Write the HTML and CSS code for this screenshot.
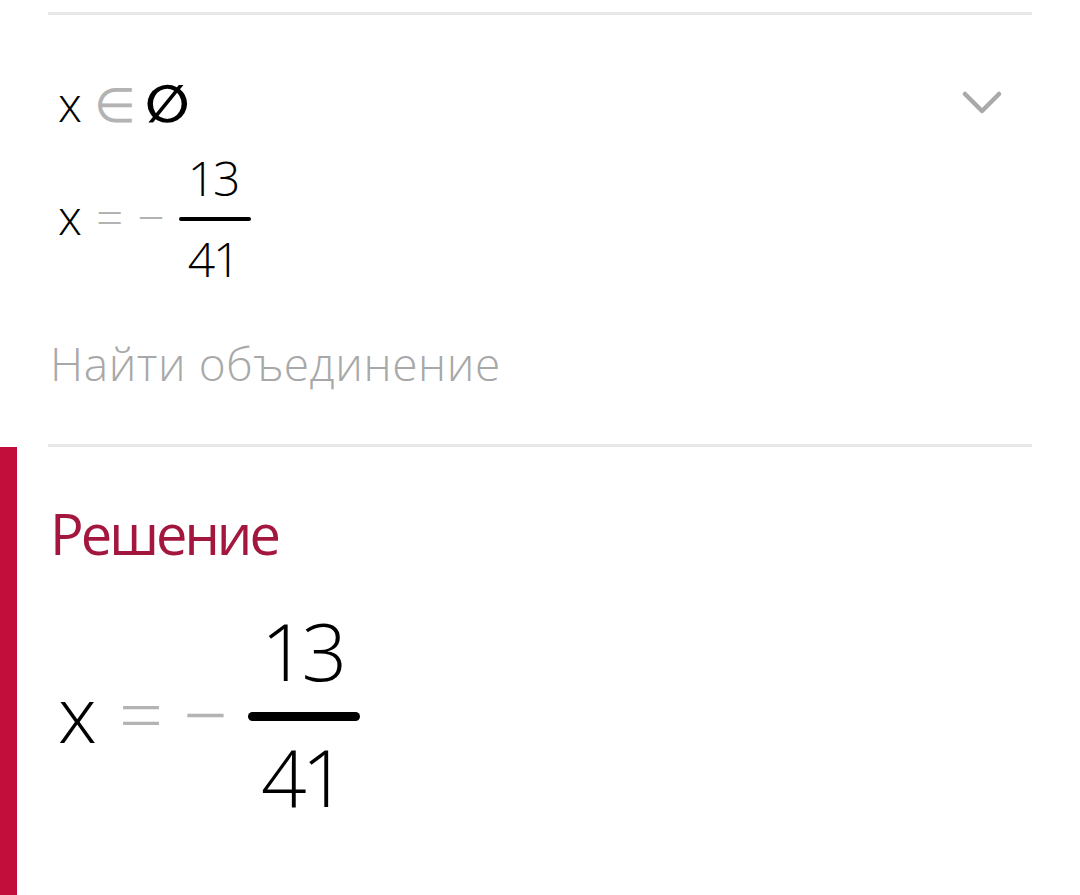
FILE: index.html
```html
<!DOCTYPE html>
<html lang="ru">
<head>
<meta charset="utf-8">
<title>Решение</title>
<link rel="stylesheet" href="styles.css">
</head>
<body>
<div class="content">
  <div class="divider"></div>
  <div class="answer-row">
    <div class="math small-line">
      <span class="var">x</span><span class="op">∈</span><span class="empty">∅</span>
    </div>
    <svg class="chevron" width="40" height="26" viewBox="0 0 40 26" aria-hidden="true">
      <path d="M3 4 L20 21 L37 4" fill="none" stroke="#a9a9a9" stroke-width="4.5" stroke-linecap="round" stroke-linejoin="round"/>
    </svg>
  </div>
  <div class="math small-row">
    <span class="var small-x">x</span>
    <span class="op small-op">=</span>
    <span class="op small-op">−</span>
    <span class="frac small-frac">
      <span class="num">13</span>
      <span class="bar"></span>
      <span class="den">41</span>
    </span>
  </div>
  <div class="hint">Найти объединение</div>
  <div class="divider divider-bottom"></div>
</div>
<section class="solution">
  <h2 class="title">Решение</h2>
  <div class="math big-row">
    <span class="var big-x">x</span>
    <span class="op big-op">=</span>
    <span class="op big-op">−</span>
    <span class="frac big-frac">
      <span class="num">13</span>
      <span class="bar"></span>
      <span class="den">41</span>
    </span>
  </div>
</section>
</body>
</html>
```

FILE: styles.css
```css
html, body {
  margin: 0;
  padding: 0;
  background: #ffffff;
}

body {
  font-family: "Open Sans", "DejaVu Sans", sans-serif;
  font-weight: 300;
  color: #111111;
  height: 895px;
  overflow: hidden;
}

.content {
  padding: 0 48px;
}

.divider {
  height: 3px;
  background: #e8e8e8;
  margin-top: 12px;
}

.divider-bottom {
  margin-top: 51px;
}

.answer-row {
  display: flex;
  justify-content: space-between;
  align-items: flex-start;
  margin-top: 65px;
}

.math {
  display: flex;
  align-items: flex-start;
  padding-left: 10px;
}

.small-line {
  font-size: 48px;
  line-height: 48px;
  gap: 12px;
}

.var {
  color: #000000;
  font-weight: 300;
}

.op {
  color: #b3b3b3;
}

.empty {
  font-family: "DejaVu Sans", sans-serif;
  font-size: 52px;
  font-weight: 700;
  color: #000000;
  margin-left: -3px;
}

.chevron {
  margin-top: 10px;
  margin-right: 30px;
}

.small-row {
  margin-top: 28px;
  font-size: 48px;
  line-height: 48px;
  gap: 14px;
}

.small-x,
.small-op {
  margin-top: 37px;
}

.frac {
  display: flex;
  flex-direction: column;
  align-items: center;
  font-weight: 300;
  color: #000000;
}

.small-frac .num,
.small-frac .den {
  line-height: 44px;
  letter-spacing: -2px;
  padding: 0 12px 0 9px;
}

.small-frac .bar {
  align-self: stretch;
  height: 4px;
  border-radius: 2px;
  background: #000000;
  margin: 17px 0 16px;
}

.hint {
  margin-top: 52px;
  font-size: 46px;
  line-height: 60px;
  font-weight: 300;
  color: #a8a8a8;
  padding-left: 2px;
  letter-spacing: 0.6px;
}

.solution {
  border-left: 17px solid #c20e3a;
  padding-left: 33px;
  padding-top: 51px;
  height: 448px;
  box-sizing: border-box;
}

.title {
  margin: 0;
  font-size: 56px;
  line-height: 70px;
  font-weight: 400;
  color: #a3173e;
  letter-spacing: -3px;
}

.big-row {
  margin-top: 47px;
  font-size: 78px;
  line-height: 90px;
  gap: 20px;
  padding-left: 8px;
}

.big-x,
.big-op {
  margin-top: 53px;
}

.big-x {
  margin-right: 2px;
}

.big-frac .num,
.big-frac .den {
  font-size: 80px;
  line-height: 70px;
  font-weight: 300;
  letter-spacing: -5px;
  padding: 0 18px 0 13px;
}

.big-frac .bar {
  align-self: stretch;
  height: 9px;
  border-radius: 5px;
  background: #000000;
  margin: 27px 0 20px;
}
```
